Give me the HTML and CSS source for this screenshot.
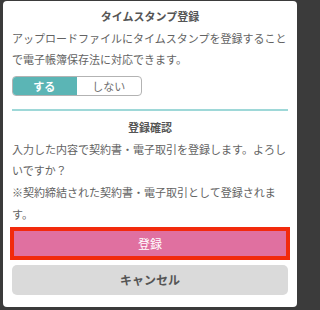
FILE: index.html
```html
<!DOCTYPE html>
<html lang="ja">
<head>
<meta charset="utf-8">
<link rel="stylesheet" href="styles.css">
</head>
<body>
<div class="modal">
  <div class="section-title">タイムスタンプ登録</div>
  <p class="text">アップロードファイルにタイムスタンプを登録することで電子帳簿保存法に対応できます。</p>
  <div class="toggle">
    <span class="opt opt-on">する</span>
    <span class="opt">しない</span>
  </div>
  <hr class="divider">
  <div class="section-title">登録確認</div>
  <p class="text">入力した内容で契約書・電子取引を登録します。よろしいですか？</p>
  <p class="text">※契約締結された契約書・電子取引として登録されます。</p>
  <div class="actions">
    <button class="btn btn-primary">登録</button>
    <button class="btn btn-cancel">キャンセル</button>
  </div>
</div>
</body>
</html>
```

FILE: styles.css
```css
html, body {
  margin: 0;
  padding: 0;
}
html {
  background: #3b3b3b;
}
body {
  width: 300px;
  height: 310px;
  font-family: "Noto Sans CJK JP", "Noto Sans", sans-serif;
  color: #636363;
}
.modal {
  margin: 1px 3px 0;
  background: #fff;
  border-radius: 4px;
  padding: 5px 9px 12px;
}
.section-title {
  text-align: center;
  font-size: 11px;
  font-weight: bold;
  line-height: 21.5px;
  color: #555;
}
.text {
  margin: 0;
  font-size: 11px;
  line-height: 21.8px;
  line-break: strict;
}
.toggle {
  display: flex;
  width: 130px;
  height: 20px;
  margin-top: 5px;
  border: 1px solid #b3b3b3;
  border-radius: 4px;
  overflow: hidden;
  box-sizing: border-box;
}
.opt {
  flex: 1;
  display: flex;
  align-items: center;
  justify-content: center;
  font-size: 11px;
  color: #707070;
}
.opt-on {
  background: #5bb5b5;
  color: #fff;
  font-weight: bold;
  margin: -1px 0 -1px -1px;
  border-radius: 4px 0 0 4px;
}
.divider {
  margin: 13px 0 6px;
  border: 0;
  height: 2px;
  background: #9ed8d8;
}
.actions {
  display: flex;
  flex-direction: column;
  gap: 7px;
  margin-top: 3px;
}
.btn {
  display: block;
  width: 100%;
  border: 0;
  font-family: inherit;
  font-size: 12px;
  cursor: pointer;
}
.btn-primary {
  height: 29px;
  background: #e070a0;
  color: #fff;
  border: 2px solid #f22a0c;
  outline: 2px solid #f22a0c;
}
.btn-cancel {
  height: 30px;
  background: #dadada;
  color: #555;
  font-weight: bold;
  border-radius: 5px;
}
```
